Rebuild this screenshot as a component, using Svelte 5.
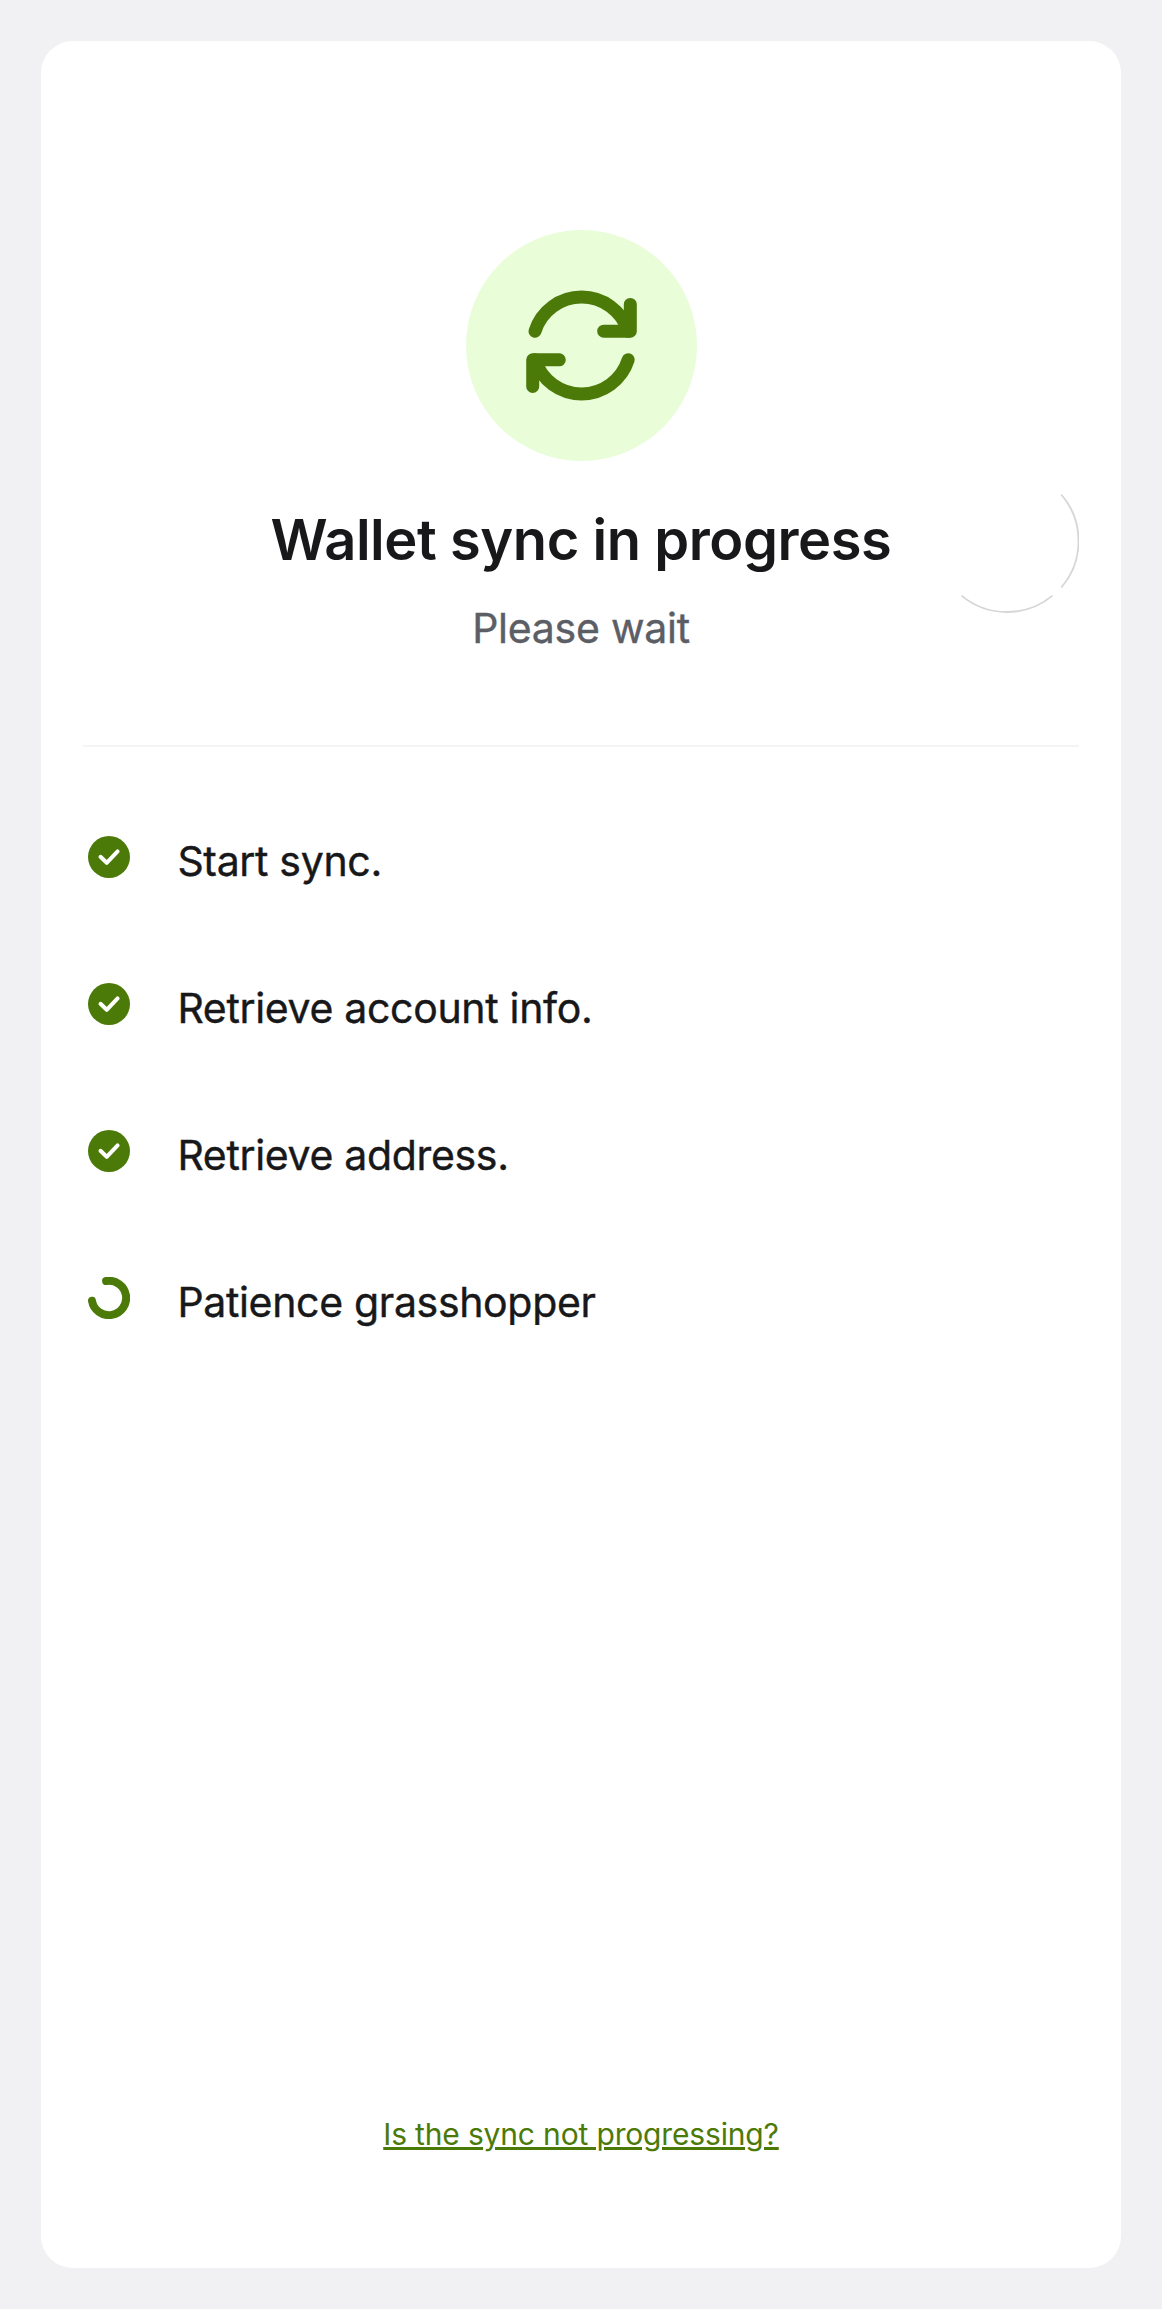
<script>
  const steps = [
    { label: 'Start sync.', done: true },
    { label: 'Retrieve account info.', done: true },
    { label: 'Retrieve address.', done: true },
    { label: 'Patience grasshopper', done: false },
  ];
</script>

<main class="screen">
  <section class="card">
    <header class="hero">
      <div class="badge">
        <svg viewBox="0 0 231 231" aria-hidden="true">
          <path d="M69 101.2A48.9 48.9 0 0 1 162.2 101.2" />
          <path d="M164.3 74.4V101.2H137.7" />
          <path d="M162.2 129.8A48.9 48.9 0 0 1 69 129.8" />
          <path d="M66.7 156.4V129.8H93.3" />
        </svg>
      </div>
      <h1>Wallet sync in progress</h1>
      <p class="subtitle">Please wait</p>
      <svg class="ripple" viewBox="0 0 144 144" aria-hidden="true">
        <path d="M126.3 25.5A71.3 71.3 0 0 1 126.3 118.5" />
        <path d="M117.5 126.6A71.3 71.3 0 0 1 26.5 126.6" />
      </svg>
    </header>

    <ul class="steps">
      {#each steps as step}
        <li>
          {#if step.done}
            <svg class="status" viewBox="0 0 42 42" aria-hidden="true">
              <circle cx="21" cy="21" r="21" />
              <path class="tick" d="M12.5 20.8L18.7 26.8L29.6 15.4" />
            </svg>
          {:else}
            <svg class="status" viewBox="0 0 42 42" aria-hidden="true">
              <path class="spinner" d="M18.1 4A17.2 17.2 0 1 1 4 23.8" />
            </svg>
          {/if}
          <span>{step.label}</span>
        </li>
      {/each}
    </ul>

    <a class="help" href="#help">Is the sync not progressing?</a>
  </section>
</main>

<style>
  :global(body) {
    margin: 0;
    background: #f1f1f4;
  }
  .screen {
    box-sizing: border-box;
    width: 1162px;
    height: 2309px;
    padding: 41px;
    background: #f1f1f4;
    font-family: Inter, sans-serif;
    color: #18181a;
  }
  .card {
    box-sizing: border-box;
    display: flex;
    flex-direction: column;
    height: 2227px;
    padding: 0 42px;
    border-radius: 32px;
    background: #fff;
  }
  .hero {
    position: relative;
    box-sizing: border-box;
    display: flex;
    flex-direction: column;
    align-items: center;
    height: 706px;
    padding-top: 189px;
    border-bottom: 2px solid #f4f4f5;
  }
  .badge {
    width: 231px;
    height: 231px;
    border-radius: 50%;
    background: #e8fdd8;
  }
  .badge svg {
    display: block;
    fill: none;
    stroke: #4c7a09;
    stroke-width: 13;
    stroke-linecap: round;
    stroke-linejoin: round;
  }
  h1 {
    margin: 45px 0 0;
    font-size: 56px;
    font-weight: 600;
    line-height: 68px;
    letter-spacing: -0.44px;
    white-space: nowrap;
  }
  .subtitle {
    margin: 29px 0 0;
    font-size: 41px;
    line-height: 50px;
    font-weight: 400;
    letter-spacing: -0.25px;
    -webkit-text-stroke: 0.4px currentColor;
    color: #5c5e66;
    white-space: nowrap;
  }
  .ripple {
    position: absolute;
    top: 428px;
    right: 0;
    width: 144px;
    height: 144px;
    fill: none;
    stroke: #d6d6d9;
    stroke-width: 1.8;
  }
  .steps {
    display: flex;
    flex-direction: column;
    gap: 97px;
    margin: 89px 0 0;
    padding: 0 0 0 5.4px;
    list-style: none;
  }
  li {
    display: flex;
    gap: 47px;
    height: 50px;
    font-size: 41px;
    font-weight: 400;
    line-height: 50px;
    letter-spacing: -0.33px;
    -webkit-text-stroke: 0.4px currentColor;
    white-space: nowrap;
  }
  .status {
    width: 42px;
    height: 42px;
    fill: #4c7a09;
  }
  .status .tick {
    fill: none;
    stroke: #fff;
    stroke-width: 4;
    stroke-linecap: round;
    stroke-linejoin: round;
  }
  .status .spinner {
    fill: none;
    stroke: #4c7a09;
    stroke-width: 8;
    stroke-linecap: round;
  }
  .help {
    align-self: center;
    margin: auto 0 116px;
    font-size: 30px;
    line-height: 36px;
    letter-spacing: -0.16px;
    color: #4c7a09;
    text-decoration: underline;
    text-decoration-thickness: 3px;
    text-underline-offset: 2px;
    white-space: nowrap;
  }
</style>
